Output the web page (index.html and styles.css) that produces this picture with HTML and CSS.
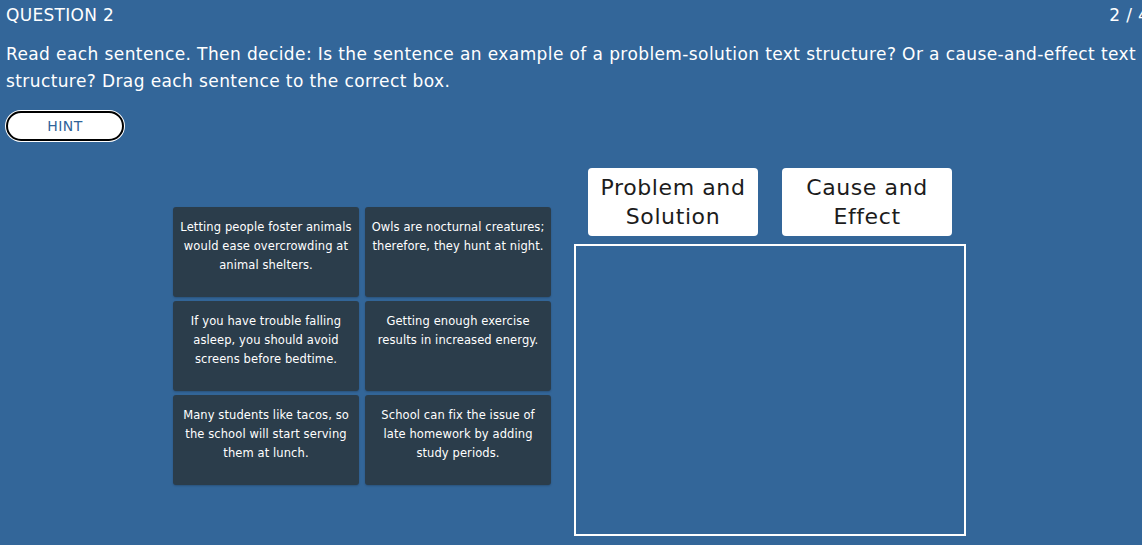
FILE: index.html
```html
<!DOCTYPE html>
<html lang="en">
<head>
  <meta charset="UTF-8">
  <title>Question 2</title>
  <link rel="stylesheet" href="styles.css">
</head>
<body>
  <div class="page">
    <div class="top-bar">
      <span>QUESTION 2</span>
      <span>2 / 4</span>
    </div>

    <p class="prompt">Read each sentence. Then decide: Is the sentence an example of a problem-solution text structure? Or a cause-and-effect text structure? Drag each sentence to the correct box.</p>

    <button class="hint">HINT</button>

    <div class="activity">
      <div class="cards">
        <div class="card">Letting people foster animals would ease overcrowding at animal shelters.</div>
        <div class="card">Owls are nocturnal creatures; therefore, they hunt at night.</div>
        <div class="card">If you have trouble falling asleep, you should avoid screens before bedtime.</div>
        <div class="card">Getting enough exercise results in increased energy.</div>
        <div class="card">Many students like tacos, so the school will start serving them at lunch.</div>
        <div class="card">School can fix the issue of late homework by adding study periods.</div>
      </div>

      <div class="sort-area">
        <div class="labels">
          <div class="label">Problem and Solution</div>
          <div class="label">Cause and Effect</div>
        </div>
        <div class="drop-zone"></div>
      </div>
    </div>
  </div>
</body>
</html>
```

FILE: styles.css
```css
body {
  margin: 0;
  background: #336699;
  color: #fff;
  font-family: "DejaVu Sans", "Noto Sans", sans-serif;
  overflow: hidden;
}

.page {
  width: 1150px;
  padding: 0 6px;
}

.top-bar {
  display: flex;
  justify-content: space-between;
  font-size: 17px;
  line-height: 20px;
  letter-spacing: 0.3px;
  padding: 5px 7px 0 0;
}

.prompt {
  max-width: 1140px;
  margin: 16px 0 0;
  font-size: 17px;
  line-height: 27px;
  letter-spacing: 0.4px;
}

.hint {
  margin-top: 16px;
  width: 118px;
  height: 30px;
  background: #fff;
  border: 2px solid #000;
  border-radius: 15px;
  box-shadow: 0 0 0 1px #fff;
  color: #2f6399;
  font-family: inherit;
  font-size: 14px;
  letter-spacing: 0.5px;
  cursor: pointer;
}

.activity {
  display: flex;
  align-items: flex-start;
  margin-top: 27px;
  padding-left: 167px;
}

.cards {
  display: grid;
  grid-template-columns: 186px 186px;
  grid-auto-rows: 90px;
  column-gap: 6px;
  row-gap: 4px;
  margin-top: 39px;
}

.card {
  background: #2b3d4b;
  border-radius: 3px;
  padding: 11px 5px;
  font-size: 11.5px;
  line-height: 19px;
  letter-spacing: 0.1px;
  text-align: center;
  box-shadow: 0 1px 2px rgba(0,0,0,0.2);
}

.sort-area {
  margin-left: 23px;
  width: 392px;
}

.labels {
  display: flex;
  justify-content: center;
  gap: 24px;
}

.label {
  width: 170px;
  height: 68px;
  background: #fff;
  border-radius: 4px;
  color: #1c1c1c;
  font-size: 22px;
  line-height: 29px;
  letter-spacing: 0.6px;
  text-align: center;
  display: flex;
  align-items: center;
  justify-content: center;
  padding: 0 6px;
  box-sizing: border-box;
}

.drop-zone {
  margin-top: 8px;
  height: 288px;
  border: 2px solid #fff;
}
```
